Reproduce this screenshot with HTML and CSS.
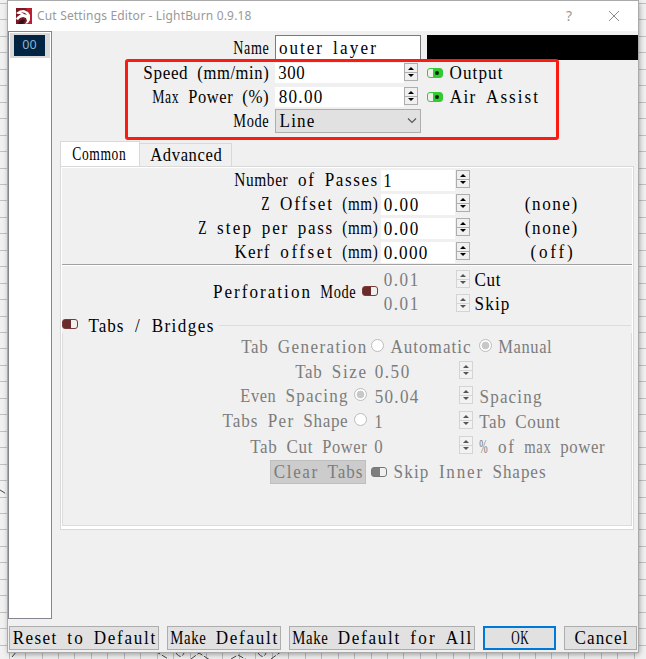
FILE: index.html
```
<!DOCTYPE html>
<html lang="en">
<head>
<meta charset="utf-8">
<title>Cut Settings Editor - LightBurn 0.9.18</title>
<link rel="stylesheet" href="styles.css">
</head>
<body>
<svg class="canvas" width="646" height="659" aria-hidden="true">
  <path id="grid" stroke="#c0c0c0" fill="none" shape-rendering="crispEdges"/>
  <g fill="none" stroke="#444" stroke-dasharray="6 2">
    <path d="M0 490L8 495"/><path stroke-dasharray="none" d="M12 657L17 651"/><path d="M155 651L170 660M191 659L199 653L210 660M231 659L238 655L247 660M271 659L282 651H290"/>
    <path d="M176 653Q181 660 184 653M258 653Q263 660 266 653"/>
  </g>
</svg>
<main class="window">
  <header class="titlebar">
    <svg class="logo" width="16" height="16" viewBox="0 0 16 16"><rect width="16" height="16" fill="#7c1823"/><path d="M10 0h6v16H9l4-6z" fill="#b91f2c"/><path d="M0 5L4 2.500 8 2l4 2 2 3v5l-2 3-3 1 2-3-1-3-3-1-3 1-2 2-2-1 1-2 4-3-3 0z" fill="#fff"/><path d="M3 14q3-4 6-2l-2 4H2z" fill="#32121a"/><path d="M5 4l4 1 2 2-3-1z" fill="#7c1823"/></svg>
    <span class="caption">Cut Settings Editor - LightBurn 0.9.18</span>
    <span class="help">?</span>
    <svg class="close" width="12" height="12" viewBox="0 0 12 12"><path d="M1 1l10 10M11 1L1 11" stroke="#8c8c8c" fill="none"/></svg>
  </header>
  <div class="client">
    <aside class="layers"><div class="layer"><span class="swatch">00</span></div></aside>
    <section class="settings">
      <div class="general">
        <div class="row"><label class="m">Name</label><div class="name m">outer layer</div><div class="layer-color"></div></div>
        <div class="row"><label class="m">Speed (mm/min)</label><div class="value wide m">300</div><i class="spin"></i><i class="toggle on"></i><span class="m after">Output</span></div>
        <div class="row"><label class="m">Max Power (%)</label><div class="value wide m">80.00</div><i class="spin"></i><i class="toggle on"></i><span class="m after">Air Assist</span></div>
        <div class="row"><label class="m">Mode</label><div class="select"><span class="m">Line</span><svg width="10" height="6" viewBox="0 0 10 6"><path d="M1 .5l4 4 4-4" fill="none" stroke="#555" stroke-width="1.100"/></svg></div></div>
        <div class="highlight"></div>
      </div>
      <nav class="tabs"><span class="tab active m">Common</span><span class="tab m">Advanced</span></nav>
      <div class="panel">
        <div class="passes">
          <div class="row"><label class="m">Number of Passes</label><div class="value m">1</div><i class="spin"></i></div>
          <div class="row"><label class="m">Z Offset (mm)</label><div class="value m">0.00</div><i class="spin"></i><span class="state m">(none)</span></div>
          <div class="row"><label class="m">Z step per pass (mm)</label><div class="value m">0.00</div><i class="spin"></i><span class="state m">(none)</span></div>
          <div class="row"><label class="m">Kerf offset (mm)</label><div class="value m">0.000</div><i class="spin"></i><span class="state m">(off)</span></div>
        </div>
        <div class="perforation">
          <label class="m">Perforation Mode</label><i class="toggle"></i>
          <div class="pair">
            <div class="row off"><div class="value m">0.01</div><i class="spin"></i><span class="m unit">Cut</span></div>
            <div class="row off"><div class="value m">0.01</div><i class="spin"></i><span class="m unit">Skip</span></div>
          </div>
        </div>
        <div class="group-title"><i class="toggle"></i><span class="m">Tabs / Bridges</span><i class="rule"></i></div>
        <div class="group">
          <div class="row"><label class="m">Tab Generation</label><i class="radio"></i><span class="m automatic">Automatic</span><i class="radio checked"></i><span class="m manual">Manual</span></div>
          <div class="row off"><label class="m">Tab Size</label><div class="value m">0.50</div><i class="spin"></i></div>
          <div class="row off"><label class="with-radio"><span class="m">Even Spacing</span><i class="radio checked"></i></label><div class="value m">50.04</div><i class="spin"></i><span class="m unit">Spacing</span></div>
          <div class="row off"><label class="with-radio"><span class="m">Tabs Per Shape</span><i class="radio"></i></label><div class="value m">1</div><i class="spin"></i><span class="m unit">Tab Count</span></div>
          <div class="row off"><label class="m">Tab Cut Power</label><div class="value m">0</div><i class="spin"></i><span class="m unit">% of max power</span></div>
          <div class="row last"><span class="clear m">Clear Tabs</span><i class="toggle gray"></i><span class="m after">Skip Inner Shapes</span></div>
        </div>
      </div>
    </section>
  </div>
  <footer class="buttons">
    <span class="button b1 m">Reset to Default</span><span class="button b2 m">Make Default</span><span class="button b3 m">Make Default for All</span><span class="button primary m">OK</span><span class="button m">Cancel</span>
  </footer>
</main>
<script src="script.js"></script>
</body>
</html>
```
FILE: styles.css
```
* { box-sizing: border-box; }
body { margin: 0; width: 646px; height: 659px; overflow: hidden; background: #f1f1f1; padding: 1px 8px 7px; font: 18px/24px "Liberation Serif", serif; color: #000; }
.canvas { position: absolute; left: 0; top: 0; z-index: -1; }
.window { width: 630px; height: 651px; background: #f0f0f0; box-shadow: 0 0 0 1px #aaa, 1px 2px 6px rgba(0,0,0,.4); display: flex; flex-direction: column; }
.m { white-space: nowrap; }
.word, .glyphs { display: inline-block; white-space: nowrap; text-align: left; }
.glyphs { transform-origin: 0 50%; }
.titlebar { height: 30px; flex: none; background: #fff; display: flex; align-items: center; padding: 0 18px 0 8px; color: #999; font-family: "Noto Sans", sans-serif; }
.logo { margin-right: 5px; }
.caption { font-size: 12px; letter-spacing: .17px; white-space: nowrap; }
.help { margin-left: auto; margin-right: 36px; font-size: 14px; }
.client { display: flex; height: 588px; flex: none; }
.layers { width: 44px; flex: none; background: #fff; border: 1px solid #828790; padding: 1px; }
.layer { height: 25px; background: #d9d9d9; padding: 2px 5px 2px 4px; }
.swatch { display: block; height: 21px; background: #002442; color: #8fb2cf; font: 12.5px/20px "Noto Sans", sans-serif; text-align: center; }
.settings { width: 586px; padding: 4px 0 0 8px; }
.general { position: relative; height: 106px; display: flex; flex-direction: column; margin-left: -8px; }
.row { display: flex; height: 24px; flex: none; align-items: center; }
.row label, .perforation label { text-align: right; flex: none; }
.general .row:first-child { height: 26px; }
.general label { width: 217px; margin-right: 6px; }
.name { width: 146px; height: 26px; line-height: 24px; border: 1px solid #7a7a7a; background: #fff; padding-left: 2px; }
.layer-color { margin: -1px 0 0 6px; width: 211px; height: 25px; background: #000; }
.value { width: 74px; height: 21px; line-height: 22px; background: #fff; padding-left: 2px; flex: none; }
.value.wide { width: 129px; height: 20px; line-height: 21px; padding-left: 3px; }
.spin { width: 14px; height: 18px; margin-left: 1px; flex: none; border: 1px solid #adadad; background: linear-gradient(#adadad, #adadad) 0 8px / 12px 1px no-repeat, #f0f0f0; display: flex; flex-direction: column; align-items: center; justify-content: space-between; padding: 3px 0; color: #000; }
.spin::before { content: ""; border: solid transparent; border-width: 0 3px 3px; border-bottom-color: currentColor; }
.spin::after { content: ""; border: solid transparent; border-width: 3px 3px 0; border-top-color: currentColor; }
.general .spin { margin: -2px 0 0 1px; }
.general .value.wide { margin-right: -1px; }
.passes .spin { margin-top: -2px; }
.pair .spin { margin-top: -2px; }
.toggle { width: 16px; height: 10px; flex: none; border: 1px solid #7a3a38; border-radius: 3px; background: linear-gradient(90deg, #6b2b2a 8px, #f0f0f0 8px); position: relative; }
.toggle.on { margin: -1px 0 0 9px; border-color: #35c935; background: linear-gradient(90deg, #f0f0f0 5px, #30cc30 5px); }
.toggle.on::after { content: ""; position: absolute; right: 3px; top: 2px; width: 4px; height: 4px; border-radius: 50%; background: #052505; }
.toggle.gray { border-color: #777; background: linear-gradient(90deg, #7f7f7f 8px, #f0f0f0 8px); }
.after { margin-left: 6px; }
.select { width: 146px; height: 24px; background: #e1e1e1; border: 1px solid #adadad; display: flex; align-items: center; justify-content: space-between; padding: 0 3px; }
.highlight { position: absolute; left: 73px; top: 24px; width: 434px; height: 81px; border: 3px solid #fb1b10; border-radius: 3px; }
.tabs { height: 25px; display: flex; align-items: flex-end; }
.tab { height: 23px; width: 92px; line-height: 23px; border: 1px solid #d9d9d9; border-left: 0; border-bottom: 0; text-align: center; }
.tab.active { height: 25px; width: 80px; background: #fff; border-left: 1px solid #d9d9d9; line-height: 25px; padding-right: 2px; }
.panel { width: 574px; height: 364px; border: 1px solid #d9d9d9; box-shadow: inset 0 0 0 1px #fff, inset 0 -3px #fff; padding: 1px; }
.passes { height: 97px; border-bottom: 1px solid #a0a0a0; box-shadow: 0 1px #fff; }
.passes label { width: 316px; margin-right: 3px; }
.state { width: 168px; text-align: center; }
.perforation { height: 51px; display: flex; align-items: center; padding-top: 2px; }
.perforation label { width: 294px; }
.perforation > .toggle { margin: -1px 3px 0 6px; }
.pair { display: flex; flex-direction: column; }
.pair .unit { margin-left: 4px; color: #000; }
.off, .group { color: #7c7c7c; }
.off .value { background: none; }
.off .spin { border-color: #d4d4d4; background: linear-gradient(#d4d4d4, #d4d4d4) 0 8px / 12px 1px no-repeat, #f2f2f2; color: #555; }
.group-title { height: 17px; display: flex; align-items: center; line-height: 18px; }
.group-title .toggle { margin-right: 10px; margin-top: -1px; }
.group-title .m { margin-top: 2px; }
.rule { height: 1px; flex: 1; margin: 1px 1px 0 5px; background: #dcdcdc; }
.group { width: 570px; height: 193px; border: 1px solid #dcdcdc; border-top: 0; padding-top: 1px; }
.group .row { height: 25px; }
.group label { width: 304px; margin-right: 4px; }
.group .value { width: 87px; padding-left: 3px; }
.group .spin { margin: -3px 0 0 1px; }
.group .unit { margin-left: 6px; }
.group .radio { width: 13px; height: 13px; border: 1px solid #bcbcbc; border-radius: 50%; background: #fff; flex: none; margin-top: -2px; }
.group .checked { background: radial-gradient(circle, #c8c8c8 3.5px, #fff 4.2px); }
.automatic { margin: 0 8px 0 6px; }
.manual { margin-left: 6px; }
.group .with-radio { display: flex; justify-content: flex-end; align-items: center; gap: 6px; margin-top: -2px; }
.last { padding-left: 207px; }
.clear { width: 96px; height: 24px; line-height: 23px; background: #ccc; border: 1px solid #bfbfbf; text-align: center; margin: 0 5px 0 0; }
.buttons { display: flex; gap: 8px; padding: 7px 1px 0; }
.button { width: 73px; height: 24px; line-height: 23px; border: 1px solid #adadad; background: #e1e1e1; text-align: center; }
.b1 { width: 150px; }
.b2 { width: 114px; }
.b3 { width: 186px; }
.primary { border: 2px solid #0078d7; line-height: 21px; }
```
FILE: script.js
```
// Fit each word of the dialog text to fixed 9px character cells,
// condensing words whose letters are wider than their cells.
const CELL = 9;
document.querySelectorAll('.m').forEach((el) => {
  const words = el.textContent.split(' ');
  el.textContent = '';
  words.forEach((text, i) => {
    if (i) el.append(' ');
    const word = document.createElement('span');
    const glyphs = document.createElement('span');
    word.className = 'word';
    glyphs.className = 'glyphs';
    glyphs.textContent = text;
    word.append(glyphs);
    el.append(word);
    const n = text.length;
    const width = glyphs.getBoundingClientRect().width;
    const scale = Math.min(0.95, (CELL - 0.6) * n / width);
    const spacing = (CELL * n / scale - width) / n;
    word.style.width = CELL * n + 'px';
    glyphs.style.letterSpacing = spacing + 'px';
    glyphs.style.transform = `translateX(${spacing * scale / 2}px) scaleX(${scale})`;
  });
  el.style.wordSpacing = CELL - 4.5 + 'px';
});

// Canvas grid behind the window.
let lines = '';
for (let i = 0; i < 41; i++) {
  lines += `M0 ${Math.round(3 + i * 16.45) + 0.5}H646`;
  lines += `M${Math.round(8.6 + i * 16.45) + 0.5} 0V659`;
}
document.getElementById('grid').setAttribute('d', lines);
```
